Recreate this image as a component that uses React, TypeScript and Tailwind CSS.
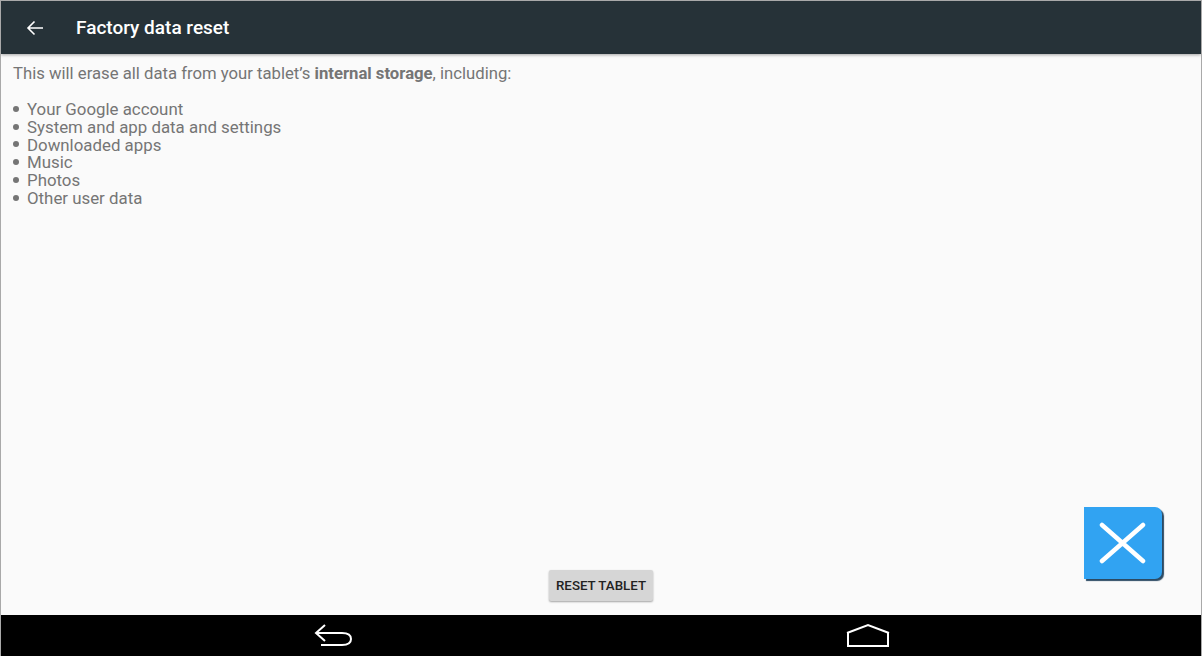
export default function App() {
  const items = [
    'Your Google account',
    'System and app data and settings',
    'Downloaded apps',
    'Music',
    'Photos',
    'Other user data',
  ];

  return (
    <div className="relative flex h-[656px] w-[1202px] flex-col overflow-hidden border-x border-t border-[#a9a9a9] bg-[#fafafa] font-['Roboto',sans-serif]">
      {/* Header */}
      <div className="flex h-[53px] shrink-0 items-center bg-[#263238] shadow-[0_1px_3px_rgba(0,0,0,0.35)]">
        <svg className="ml-[25px] h-[18px] w-[18px]" viewBox="0 0 18 18" fill="none" stroke="#ffffff" strokeWidth="1.6">
          <path d="M17 9H2M8.500 2.500 2 9l6.500 6.500" />
        </svg>
        <h1 className="ml-[32px] pt-[2px] text-[19px] font-medium text-white">Factory data reset</h1>
      </div>

      {/* Main Content */}
      <div className="flex flex-1 flex-col pl-3 text-[#757575]">
        <p className="mt-[11px] text-[16.7px] leading-[18px]">
          This will erase all data from your tablet’s <b className="font-bold">internal storage</b>, including:
        </p>
        <ul className="mt-[17px] text-[16.85px]">
          {items.map((item) => (
            <li key={item} className="flex h-[17.8px] items-center leading-[18px]">
              <span className="mr-[8px] h-[6px] w-[6px] rounded-full bg-[#757575]" />
              {item}
            </li>
          ))}
        </ul>
        <div className="mt-auto mb-[14px] flex justify-center pr-3">
          <button className="flex h-[31px] w-[104px] items-center justify-center rounded-[2px] bg-[#d6d6d6] text-[13.3px] font-medium text-[#222222] shadow-[0_1px_2px_rgba(0,0,0,0.35)]">
            RESET TABLET
          </button>
        </div>
      </div>

      {/* Nav bar */}
      <div className="relative h-[41px] shrink-0 bg-black">
        <svg className="absolute left-[313px] top-[8px] h-[26px] w-[40px]" viewBox="0 0 40 26" fill="none" stroke="#ffffff" strokeWidth="2">
          <path d="M11 2 2 10l9 8M2 10h26c6 0 9 2.500 9 6s-3 6-9 6H7" />
        </svg>
        <svg className="absolute left-[844px] top-[8px] h-[26px] w-[46px]" viewBox="0 0 46 26" fill="none" stroke="#ffffff" strokeWidth="2">
          <path d="M2 10 23 2l21 8M3 9.500V23h40V9.500" />
        </svg>
      </div>

      {/* Floating close button */}
      <button className="absolute left-[1083px] top-[506px] flex h-[72px] w-[78px] items-center justify-center rounded-tr-[7px] rounded-br-[7px] bg-[#31a3f2] shadow-[2px_2px_1px_#2c4a63]">
        <svg className="mr-[2px] h-[42px] w-[47px]" viewBox="0 0 47 42" fill="none" stroke="#ffffff" strokeWidth="4.500" strokeLinecap="round">
          <path d="M3 3 44 39M44 3 3 39" />
        </svg>
      </button>
    </div>
  );
}
